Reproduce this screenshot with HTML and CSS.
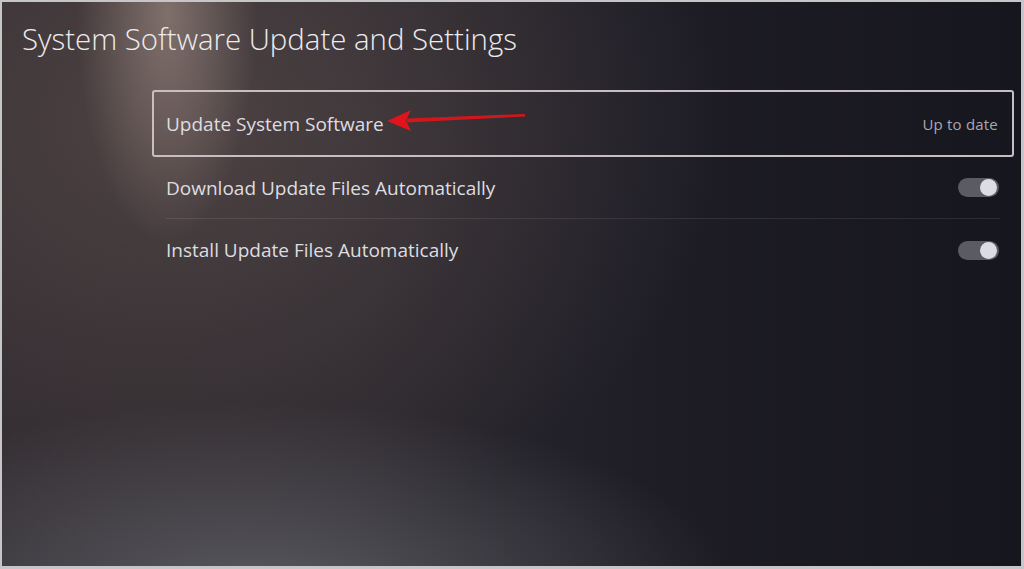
FILE: index.html
```html
<!DOCTYPE html>
<html lang="en">
<head>
<meta charset="utf-8">
<title>System Software Update and Settings</title>
<link rel="stylesheet" href="styles.css">
</head>
<body>
<div class="screen">
  <h1 class="title">System Software Update and Settings</h1>
  <div class="list">
    <div class="row selected">
      <span class="label">Update System Software</span>
      <span class="value">Up to date</span>
      <svg class="arrow" width="150" height="30" viewBox="0 0 150 30">
        <path d="M22 12.5 L140 8 L140 10.5 L22 16.5 Z" fill="#d3161b"/>
        <path d="M2 15 L26 4 L21 14.5 L26 25 Z" fill="#e0141a"/>
      </svg>
    </div>
    <div class="row">
      <div class="row-inner">
        <span class="label">Download Update Files Automatically</span>
        <span class="toggle"><span class="knob"></span></span>
      </div>
    </div>
    <div class="row">
      <div class="row-inner last">
        <span class="label">Install Update Files Automatically</span>
        <span class="toggle"><span class="knob"></span></span>
      </div>
    </div>
  </div>
</div>
</body>
</html>
```

FILE: styles.css
```css
* { box-sizing: border-box; }
html, body { margin: 0; padding: 0; }
body {
  width: 1024px;
  height: 569px;
  overflow: hidden;
  font-family: "Open Sans", "Noto Sans", sans-serif;
}
.screen {
  width: 1024px;
  height: 569px;
  border: 2px solid #c6c6c8;
  border-right-width: 3px;
  border-bottom-width: 3px;
  background:
    radial-gradient(ellipse 90px 230px at 165px 10px, rgba(160,140,132,0.65), rgba(160,140,132,0) 100%),
    radial-gradient(ellipse 480px 190px at 250px 590px, rgba(105,105,112,0.75), rgba(105,105,112,0) 100%),
    radial-gradient(ellipse 540px 440px at 180px 120px, rgba(100,84,82,0.6), rgba(100,84,82,0) 100%),
    linear-gradient(90deg, #2e292e 0%, #2a272d 35%, #1e1d26 65%, #16161f 100%);
  padding: 17px 0 0 0;
}
.title {
  margin: 0 0 0 20px;
  font-weight: 300;
  font-size: 29.4px;
  line-height: 40px;
  color: #ececee;
}
.list {
  margin: 31px 0 0 150px;
  width: 862px;
}
.row {
  position: relative;
  height: 62px;
  padding: 0 14px;
  display: flex;
  align-items: stretch;
}
.row.selected {
  height: 67px;
  border: 2px solid #c8bec2;
  border-radius: 3px;
  padding: 0 14px 0 12px;
  align-items: center;
  justify-content: space-between;
}
.row-inner {
  flex: 1;
  display: flex;
  align-items: center;
  justify-content: space-between;
  border-bottom: 1px solid rgba(255,255,255,0.09);
  padding-right: 1px;
}
.row-inner.last { border-bottom: none; }
.label {
  font-size: 19px;
  color: #dddde0;
}
.value {
  font-size: 15px;
  color: #a9a9ae;
  letter-spacing: 0.2px;
}
.toggle {
  width: 41px;
  height: 19px;
  border-radius: 10px;
  background: #5b5b63;
  display: flex;
  align-items: center;
  justify-content: flex-end;
  padding-right: 2px;
}
.knob {
  width: 17px;
  height: 17px;
  border-radius: 50%;
  background: #dcdce2;
}
.arrow {
  position: absolute;
  left: 231px;
  top: 14px;
}
```
